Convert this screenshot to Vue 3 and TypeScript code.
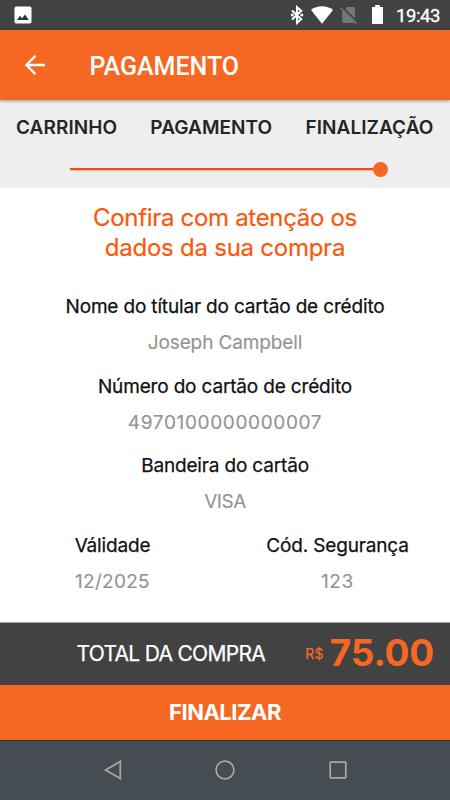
<script setup lang="ts">
import { ref } from 'vue'

interface Field {
  label: string
  value: string
  kind?: string
}

const steps = ['CARRINHO', 'PAGAMENTO', 'FINALIZAÇÃO']

const fields = ref<Field[]>([
  { label: 'Nome do títular do cartão de crédito', value: 'Joseph Campbell' },
  { label: 'Número do cartão de crédito', value: '4970100000000007', kind: 'digits' },
  { label: 'Bandeira do cartão', value: 'VISA', kind: 'brand' },
])

const halves = ref<Field[]>([
  { label: 'Válidade', value: '12/2025', kind: 'date' },
  { label: 'Cód. Segurança', value: '123', kind: 'digits' },
])
</script>

<template>
  <div class="screen">
    <div class="status">
      <svg class="photo" width="18" height="18" viewBox="0 0 18 18">
        <rect x="0.5" y="0.5" width="17" height="17" rx="1.7" fill="#fff" />
        <path d="M3 14 6 9.7 8.1 12.2 11 8.5 14.8 14Z" fill="#333" />
      </svg>
      <div class="status-right">
        <svg class="bluetooth" width="14" height="20" viewBox="0 0 14 20">
          <path d="M2 5.6 11.2 14.2 7 17.8V2.2L11.200 5.800 2 14.400" fill="none" stroke="#fff" stroke-width="2.100" />
          <path d="M1 8.800h2.600v2.400H1zM10.500 8.800h2.600v2.400h-2.600z" fill="#fff" />
        </svg>
        <svg class="wifi" width="22" height="18" viewBox="0 0 22 18">
          <path d="M0 4.1C6.2-.9 15.8-.9 22 4.1L11 17.8Z" fill="#fff" />
        </svg>
        <svg class="sim" width="18" height="18" viewBox="0 0 18 18">
          <path d="M7.2 1H13.5Q15 1 15 2.5V15.5Q15 17 13.500 17H3.700Q2.200 17 2.200 15.500V6Z" fill="#777" />
          <path d="M1.900 .8 18 16.600" stroke="#424242" stroke-width="1.800" />
          <path d="M.6 2 16.500 17.600" stroke="#777" stroke-width="1.400" />
        </svg>
        <svg class="battery" width="11" height="19" viewBox="0 0 11 19">
          <path d="M3.200 0H7.800V2H11V19H0V2H3.200Z" fill="#fff" />
        </svg>
        <span class="clock">19:43</span>
      </div>
    </div>

    <header class="appbar">
      <svg class="back" width="20" height="20" viewBox="0 0 20 20">
        <path d="M20 10H1.600M10.400 .9 1.400 10l9 9.100" fill="none" stroke="#fff" stroke-width="2.300" />
      </svg>
      <h1>PAGAMENTO</h1>
    </header>

    <section class="progress">
      <div class="steps">
        <span v-for="step in steps" :key="step">{{ step }}</span>
      </div>
      <div class="track">
        <div class="line"></div>
        <div class="dot"></div>
      </div>
    </section>

    <main>
      <h2><span class="first">Confira com atenção os</span><br />dados da sua compra</h2>
      <div v-for="f in fields" :key="f.label" class="field">
        <span class="label">{{ f.label }}</span>
        <span class="value" :class="f.kind">{{ f.value }}</span>
      </div>
      <div class="pair">
        <div v-for="f in halves" :key="f.label" class="field">
          <span class="label">{{ f.label }}</span>
          <span class="value" :class="f.kind">{{ f.value }}</span>
        </div>
      </div>
    </main>

    <div class="total">
      <span class="caption">TOTAL DA COMPRA</span>
      <span class="currency">R$</span>
      <span class="amount">75.00</span>
    </div>
    <button class="finish" type="button">FINALIZAR</button>

    <nav>
      <svg width="20" height="20" viewBox="0 0 20 20">
        <path d="M17.300 1.500V18.500L2.500 10Z" />
      </svg>
      <svg width="20" height="20" viewBox="0 0 20 20">
        <circle cx="10" cy="10" r="8.900" />
      </svg>
      <svg width="20" height="20" viewBox="0 0 20 20">
        <rect x="2.200" y="2.200" width="15.600" height="15.600" rx=".5" />
      </svg>
    </nav>
  </div>
</template>

<style>
body {
  margin: 0;
}
</style>

<style scoped>
.screen {
  width: 450px;
  height: 800px;
  display: flex;
  flex-direction: column;
  overflow: hidden;
  background: #fff;
  font-family: Inter, "Liberation Sans", sans-serif;
  color: #111;
}
svg {
  display: block;
  flex: none;
}
.status {
  box-sizing: border-box;
  height: 30px;
  padding: 0 10px 0 13.500px;
  display: flex;
  align-items: center;
  justify-content: space-between;
  background: #424242;
  border-bottom: 1px solid #383b3c;
}
.status-right {
  display: flex;
  align-items: center;
}
.wifi {
  margin-left: 7px;
}
.sim {
  margin-left: 7px;
}
.battery {
  margin-left: 14px;
}
.clock {
  width: 44px;
  margin: 2px 0 0 13.500px;
  font: 400 18.500px/28px Roboto, sans-serif;
  letter-spacing: -0.400px;
  color: #fff;
  -webkit-text-stroke: 0.300px #fff;
  white-space: nowrap;
}
.appbar {
  position: relative;
  height: 70px;
  display: flex;
  align-items: center;
  padding-left: 25px;
  background: #f56723;
  box-shadow: 0 1px 3px rgba(40, 75, 80, 0.5);
}
h1 {
  margin: 3px 0 0 44.500px;
  font: 500 25px/30px Roboto, sans-serif;
  color: #fff;
}
.progress {
  height: 87.500px;
  background: #eee;
}
.steps {
  display: flex;
  justify-content: space-between;
  padding: 14px 16.500px 0 16px;
  font-size: 19px;
  line-height: 28px;
  font-weight: 600;
  letter-spacing: 0.060px;
  color: #252525;
}
.track {
  display: flex;
  align-items: center;
  height: 16px;
  margin: 19px 62.500px 0 70px;
}
.line {
  flex: 1;
  height: 2px;
  background: #fb4d0c;
  border-bottom: 1px solid #f5b9a0;
}
.dot {
  width: 15px;
  height: 15px;
  border-radius: 50%;
  background: #f56723;
}
main {
  height: 434.500px;
  box-sizing: border-box;
  padding-top: 15px;
  text-align: center;
}
h2 {
  margin: 0 0 25.500px;
  font-size: 24px;
  line-height: 30px;
  font-weight: 400;
  letter-spacing: -0.250px;
  color: #f8590d;
  -webkit-text-stroke: 0.200px #f8590d;
}
.first {
  letter-spacing: -0.317px;
}
.field {
  display: flex;
  flex-direction: column;
  margin-bottom: 6px;
  font-size: 19px;
}
.label {
  line-height: 37px;
  letter-spacing: -0.165px;
  -webkit-text-stroke: 0.250px #111;
}
.value {
  line-height: 36.500px;
  color: #949494;
  letter-spacing: -0.120px;
  -webkit-text-stroke: 0.150px #949494;
}
.value.digits {
  letter-spacing: 0.640px;
}
.value.date {
  letter-spacing: 0.280px;
}
.value.brand {
  letter-spacing: -0.450px;
}
.pair {
  display: grid;
  grid-template-columns: 1fr 1fr;
}
.total {
  box-sizing: border-box;
  height: 63px;
  display: flex;
  align-items: center;
  padding: 0 16px 2px 76.500px;
  background: #424242;
  border-top: 1px solid #a5a5a5;
  color: #fff;
}
.caption {
  flex: 1;
  font-size: 21px;
  letter-spacing: -0.700px;
  -webkit-text-stroke: 0.250px #fff;
}
.currency {
  margin-right: 6px;
  font-size: 14px;
  letter-spacing: 0.300px;
  color: #f56723;
  -webkit-text-stroke: 0.250px #f56723;
}
.amount {
  font-size: 37px;
  line-height: 50px;
  font-weight: 700;
  letter-spacing: -0.200px;
  color: #f56723;
}
.finish {
  height: 55px;
  margin: 0;
  padding: 0;
  border: 0;
  background: #f56723;
  color: #fff;
  font: 700 22px/55px Inter, "Liberation Sans", sans-serif;
  letter-spacing: -0.500px;
}
nav {
  box-sizing: border-box;
  height: 60px;
  display: flex;
  align-items: center;
  justify-content: space-between;
  padding: 0 102.500px 1px;
  background: #454d52;
  border-top: 1px solid #23363e;
}
nav svg {
  fill: none;
  stroke: #a5a9ab;
  stroke-width: 1.700;
}
</style>
